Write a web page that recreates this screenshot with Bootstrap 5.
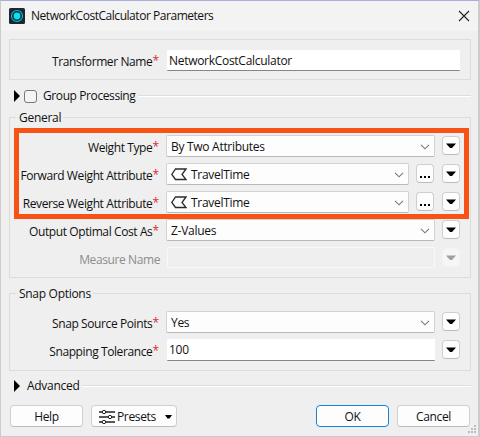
<!DOCTYPE html>
<html lang="en">
<head>
<meta charset="utf-8">
<title>NetworkCostCalculator Parameters</title>
<link href="https://cdn.jsdelivr.net/npm/bootstrap@5.3.0/dist/css/bootstrap.min.css" rel="stylesheet">
<style>
body{width:480px;height:437px;overflow:hidden;background:#c9c9c9;font:12px/16px "Open Sans","Noto Sans",sans-serif;color:#111;letter-spacing:-.29px}
.dialog{height:437px;border:1px solid #cbcbcb;border-width:1px 2px 1px 1px;border-top-color:#a9aed8;background:#efefef;padding:0 7px 0 8px}
.titlebar{height:30px;margin:0 -7px 8px -8px;padding:0 10px 0 8px;background:#f3f3f3}
.caption-text{margin-left:6px;letter-spacing:-.46px}
.panel{border:1px solid #dcdcdc;padding:0 10px 0 0}
.panel-title{width:max-content;margin:-8px 0 0 7px;padding:0 2px;background:#efefef;height:16px}
.frow{height:28px}
.lbl{width:150px;height:22px;line-height:25px;padding-right:1px;margin-right:6px;text-align:right;white-space:nowrap;letter-spacing:-.4px}
.lbl.off{color:#8c8c8c;padding:0}
.lbl.req::after{content:"*";color:#e0282e;font-size:12px;line-height:10px;position:relative;top:-1px;letter-spacing:0}
.combo{height:22px;background:#fdfdfd;border:1px solid #d2d2d2;border-bottom-color:#b9b9b9;border-radius:2px;padding:1px 4px 0}
.field{height:21px;background:#fff;border:0;border-bottom:1px solid #868686;border-radius:1px;padding:1px 2px 0;margin-left:1px}
.field.off{background:#efefef;border:1px solid #f8f8f8}
.mini{width:18px;height:19px;margin:1px 0 0 7px;background:#fdfdfd;border:1px solid #cfcfcf;border-bottom-color:#bdbdbd;border-radius:4px;flex:none}
.mini.off{background:#f6f6f6;border-color:#f3f3f3}
.rule{height:2px;background:#dedede;border-bottom:1px solid #fff}
.check{width:13px;height:13px;border:1px solid #777;border-radius:3px;background:#f4f4f4}
.hl{position:absolute;left:14px;top:128px;width:455px;height:91px;border:5px solid #f65314}
.push{height:22px;width:73px;background:#fdfdfd;border:1px solid #d0d0d0;border-bottom-color:#bdbdbd;border-radius:4px;padding:1px 0 0;font-size:12px;line-height:16px;letter-spacing:-.35px;color:#111}
.push.main{border-color:#1683d8}
.grip{position:absolute;left:467px;top:425px}
svg{display:block;flex:none}
</style>
<script src="https://cdn.jsdelivr.net/npm/bootstrap@5.3.0/dist/js/bootstrap.bundle.min.js"></script>
</head>
<body>
<svg width="0" height="0" class="position-absolute">
  <symbol id="chev" viewBox="0 0 10 6"><path d="M1 .8 5 4.8 9 .8" fill="none" stroke="#777" stroke-width="1.1"/></symbol>
  <symbol id="tri" viewBox="0 0 10 6"><path d="M0 .5H10L6 5H4Z"/></symbol>
  <symbol id="tag" viewBox="0 0 16 13"><path d="M4.5 1H15L11 6.5 15 11.5H4.5L.8 6.5Z" fill="none" stroke="#2b2b2b" stroke-width="1.3"/></symbol>
  <symbol id="dots" viewBox="0 0 10 2"><path d="M0 0H2V2H0ZM4 0H6V2H4ZM8 0H10V2H8Z"/></symbol>
</svg>
<main class="dialog">
  <header class="titlebar d-flex align-items-center">
    <svg width="16" height="16"><rect width="16" height="16" rx="1.5" fill="#1b2733"/><circle cx="8" cy="8" r="5.5" fill="none" stroke="#09bfd0" stroke-width="1.1"/><circle cx="8" cy="8" r="3.4" fill="#06e2f2"/></svg>
    <span class="caption-text">NetworkCostCalculator Parameters</span>
    <svg class="ms-auto" style="margin-right:-2px" width="12" height="12"><path d="M1 1 11 11M11 1 1 11" stroke="#222" stroke-width="1.1"/></svg>
  </header>

  <section class="panel d-flex" style="height:41px;padding-top:10px">
    <div class="lbl req" style="line-height:24px">Transformer Name</div>
    <div class="field flex-fill d-flex align-items-center">NetworkCostCalculator</div>
  </section>

  <div class="d-flex align-items-center" style="height:16px;margin-top:8px;padding-left:5px">
    <svg width="6" height="12"><path d="M0 0 6 6 0 12Z"/></svg>
    <span class="check ms-1"></span>
    <span style="margin:0 3px 0 6px;letter-spacing:-.4px">Group Processing</span>
    <span class="rule flex-fill"></span>
  </div>

  <section class="panel" style="height:161px;margin-top:13px">
    <div class="panel-title">General</div>
    <div style="padding-top:9px">
      <div class="frow d-flex"><div class="lbl req">Weight Type</div><div class="combo flex-fill d-flex align-items-center justify-content-between">By Two Attributes<svg width="10" height="6"><use href="#chev"/></svg></div><div class="mini d-flex align-items-center justify-content-center"><svg width="10" height="6"><use href="#tri"/></svg></div></div>
      <div class="frow d-flex"><div class="lbl req">Forward Weight Attribute</div><div class="combo flex-fill d-flex align-items-center"><svg width="16" height="13" class="me-1"><use href="#tag"/></svg>TravelTime<svg width="10" height="6" class="ms-auto"><use href="#chev"/></svg></div><div class="mini d-flex align-items-end justify-content-center pb-1"><svg width="10" height="2"><use href="#dots"/></svg></div><div class="mini d-flex align-items-center justify-content-center ms-2"><svg width="10" height="6"><use href="#tri"/></svg></div></div>
      <div class="frow d-flex"><div class="lbl req">Reverse Weight Attribute</div><div class="combo flex-fill d-flex align-items-center"><svg width="16" height="13" class="me-1"><use href="#tag"/></svg>TravelTime<svg width="10" height="6" class="ms-auto"><use href="#chev"/></svg></div><div class="mini d-flex align-items-end justify-content-center pb-1"><svg width="10" height="2"><use href="#dots"/></svg></div><div class="mini d-flex align-items-center justify-content-center ms-2"><svg width="10" height="6"><use href="#tri"/></svg></div></div>
      <div class="frow d-flex"><div class="lbl req">Output Optimal Cost As</div><div class="combo flex-fill d-flex align-items-center justify-content-between">Z-Values<svg width="10" height="6"><use href="#chev"/></svg></div><div class="mini d-flex align-items-center justify-content-center"><svg width="10" height="6"><use href="#tri"/></svg></div></div>
      <div class="frow d-flex"><div class="lbl off">Measure Name</div><div class="field off flex-fill"></div><div class="mini off d-flex align-items-center justify-content-center"><svg width="10" height="6" fill="#a0a0a0"><use href="#tri"/></svg></div></div>
    </div>
  </section>

  <section class="panel" style="height:78px;margin-top:15px">
    <div class="panel-title">Snap Options</div>
    <div style="padding-top:9px">
      <div class="frow d-flex"><div class="lbl req">Snap Source Points</div><div class="combo flex-fill d-flex align-items-center justify-content-between">Yes<svg width="10" height="6"><use href="#chev"/></svg></div><div class="mini d-flex align-items-center justify-content-center"><svg width="10" height="6"><use href="#tri"/></svg></div></div>
      <div class="frow d-flex"><div class="lbl req">Snapping Tolerance</div><div class="field flex-fill d-flex align-items-center" style="height:22px">100</div><div class="mini d-flex align-items-center justify-content-center"><svg width="10" height="6"><use href="#tri"/></svg></div></div>
    </div>
  </section>

  <div class="d-flex align-items-center" style="height:16px;margin-top:7px;padding-left:5px">
    <svg width="6" height="12"><path d="M0 0 6 6 0 12Z"/></svg>
    <span style="margin:0 3px 0 7px">Advanced</span>
    <span class="rule flex-fill"></span>
  </div>

  <footer class="d-flex" style="margin:11px 1px 0 1px">
    <button class="btn push">Help</button>
    <button class="btn push d-flex align-items-center ms-2" style="width:86px;padding-left:7px">
      <svg width="16" height="16" fill="#fff" stroke="#222"><path d="M0 3H16M0 8H16M0 13H16" stroke-width="1.6"/><circle cx="5" cy="3" r="1.7"/><circle cx="11" cy="8" r="1.7"/><circle cx="5" cy="13" r="1.7"/></svg>
      <span style="margin-left:2px">Presets</span>
      <svg width="7" height="4" style="margin-left:9px"><path d="M0 0H7L4.5 3.5H2.5Z"/></svg>
    </button>
    <button class="btn push main ms-auto">OK</button>
    <button class="btn push ms-2">Cancel</button>
  </footer>
</main>
<div class="hl"></div>
<svg class="grip" width="10" height="9" fill="#bdbdbd"><path d="M7 0h2v2h-2zM4 3h2v2h-2zM7 3h2v2h-2zM1 6h2v2h-2zM4 6h2v2h-2zM7 6h2v2h-2z"/></svg>
</body>
</html>
